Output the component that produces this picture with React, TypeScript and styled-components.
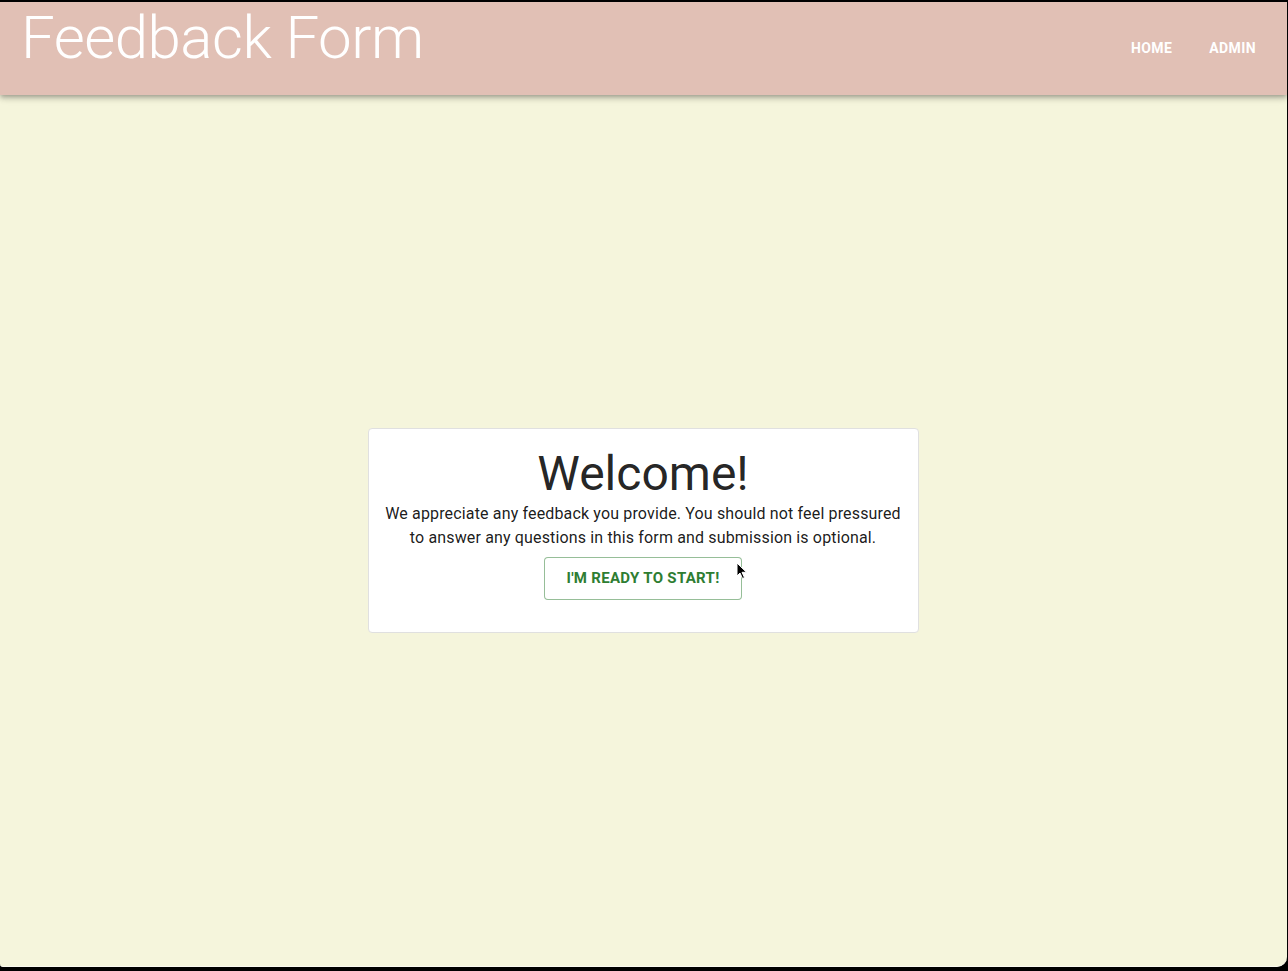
import React from "react";
import styled, { createGlobalStyle } from "styled-components";

const GlobalStyle = createGlobalStyle`
  html, body {
    margin: 0;
    padding: 0;
    background: #000;
  }
  * { box-sizing: border-box; }
`;

const Frame = styled.div`
  width: 1288px;
  height: 971px;
  background: #000;
  padding: 2px 1px 0 0;
  overflow: hidden;
`;

const Window = styled.div`
  position: relative;
  height: 965px;
  background: #f5f5dc;
  border-bottom: 1px solid #fafaf0;
  border-radius: 0 0 10px 3px;
  overflow: hidden;
  display: flex;
  flex-direction: column;
  font-family: Roboto, "Helvetica Neue", Arial, sans-serif;
`;

const AppBar = styled.header`
  height: 93px;
  flex: none;
  background: #e1c0b5;
  box-shadow: 0 2px 4px -1px rgba(0,0,0,0.2), 0 4px 5px 0 rgba(0,0,0,0.14), 0 1px 10px 0 rgba(0,0,0,0.12);
  display: flex;
  align-items: flex-start;
  justify-content: space-between;
  padding: 0 23px 0 21px;
  position: relative;
  z-index: 1;
`;

const Title = styled.h1`
  margin: 0;
  font-size: 60px;
  font-weight: 300;
  line-height: 1.2;
  letter-spacing: -0.00833em;
  color: #fff;
`;

const Nav = styled.nav`
  height: 100%;
  display: flex;
  align-items: center;
  gap: 21px;
`;

const NavButton = styled.button`
  background: none;
  border: none;
  color: #fff;
  font-family: inherit;
  font-size: 14px;
  font-weight: 700;
  letter-spacing: 0.02857em;
  text-transform: uppercase;
  padding: 6px 8px;
  line-height: 1.75;
  cursor: pointer;
`;

const Main = styled.main`
  flex: 1;
  display: flex;
  align-items: center;
  justify-content: center;
`;

const Card = styled.section`
  width: 551px;
  margin-right: 1px;
  background: #fff;
  border: 1px solid #e0e0e0;
  border-radius: 4px;
  padding: 17px 16px 32px;
  display: flex;
  flex-direction: column;
  align-items: center;
  text-align: center;
`;

const Heading = styled.h2`
  margin: 0;
  font-size: 48px;
  font-weight: 400;
  line-height: 1.167;
  color: rgba(0, 0, 0, 0.87);
`;

const Body = styled.p`
  margin: 0;
  font-size: 16px;
  line-height: 24px;
  letter-spacing: 0.00938em;
  color: rgba(0, 0, 0, 0.9);
`;

const OutlinedButton = styled.button`
  position: relative;
  margin-top: 7px;
  background: #fff;
  border: 1px solid rgba(46, 125, 50, 0.5);
  border-radius: 4px;
  color: #2e7d32;
  font-family: inherit;
  font-size: 15px;
  font-weight: 700;
  letter-spacing: 0.02em;
  text-transform: uppercase;
  line-height: 1.75;
  padding: 7px 21px;
  cursor: pointer;
`;

const Cursor = styled.svg`
  position: absolute;
  left: 191px;
  top: 4px;
  width: 12px;
  height: 18px;
  pointer-events: none;
`;

export default function App() {
  return (
    <>
      <GlobalStyle />
      <Frame>
        <Window>
          <AppBar>
            <Title>Feedback Form</Title>
            <Nav>
              <NavButton>Home</NavButton>
              <NavButton>Admin</NavButton>
            </Nav>
          </AppBar>
          <Main>
            <Card>
              <Heading>Welcome!</Heading>
              <Body>
                We appreciate any feedback you provide. You should not feel pressured to answer any questions in this form and submission is optional.
              </Body>
              <OutlinedButton>
                I'm ready to start!
                <Cursor viewBox="0 0 12 18">
                  <path d="M1 1 L1 14 L4 11 L6.5 16.5 L8.5 15.6 L6 10.3 L10.5 10.3 Z" fill="#000" stroke="#fff" strokeWidth="1" strokeLinejoin="round" />
                </Cursor>
              </OutlinedButton>
            </Card>
          </Main>
        </Window>
      </Frame>
    </>
  );
}
